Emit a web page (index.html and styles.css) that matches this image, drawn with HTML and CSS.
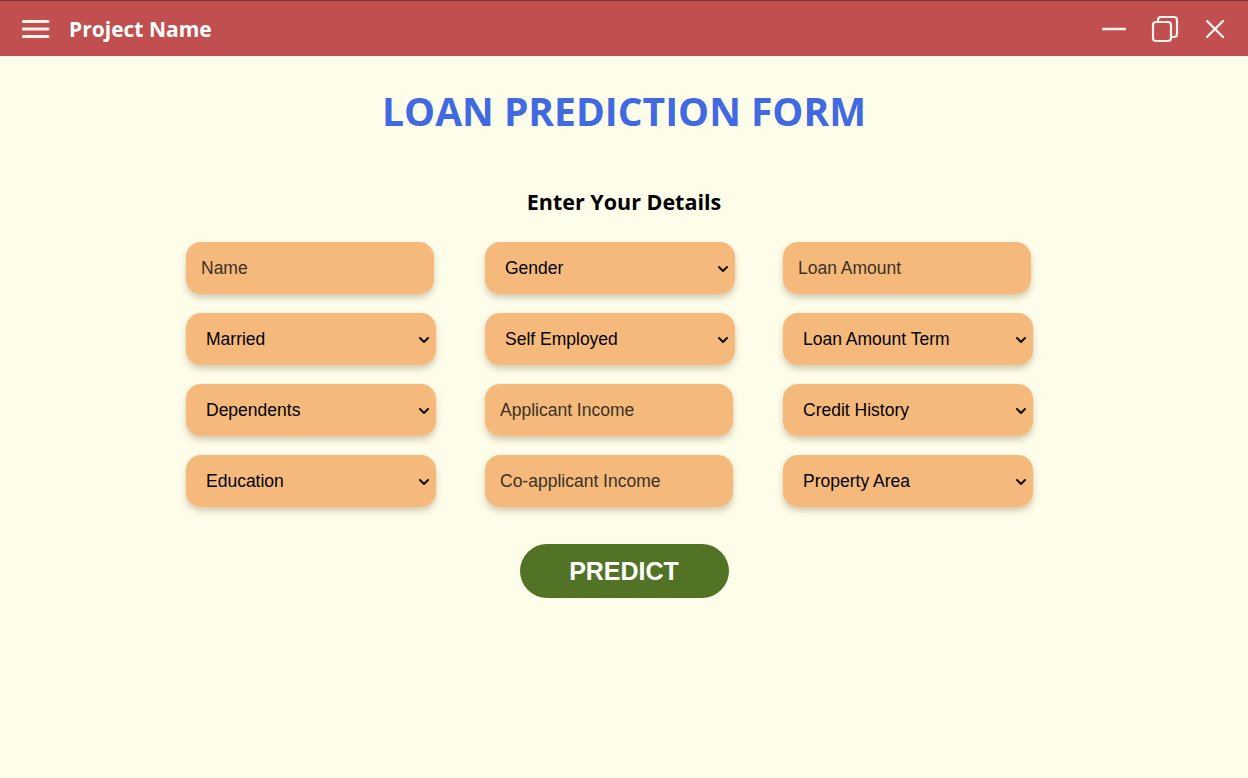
FILE: index.html
```html
<!DOCTYPE html>
<html>
<head>
<meta charset="utf-8">
<link rel="stylesheet" href="styles.css">
<title>Loan Prediction</title>
</head>
<body>
<header class="titlebar">
  <div class="tb-left">
    <svg class="icon-menu" width="28" height="20" viewBox="0 0 28 20"><path d="M1 2.5H26M1 10H26M1 17.5H26" stroke="#fdf2ea" stroke-width="3" stroke-linecap="round" fill="none"/></svg>
    <span class="tb-title">Project Name</span>
  </div>
  <div class="tb-right">
    <svg width="24" height="24" viewBox="0 0 24 24"><path d="M1 12H23" stroke="#fdf2ea" stroke-width="2.6" stroke-linecap="round"/></svg>
    <svg width="28" height="28" viewBox="0 0 28 28"><rect x="2" y="7" width="18" height="19" rx="3" stroke="#fdf2ea" stroke-width="2.2" fill="none"/><path d="M7 7V5a3 3 0 0 1 3-3h13a3 3 0 0 1 3 3v14a3 3 0 0 1-3 3h-3" stroke="#fdf2ea" stroke-width="2.2" fill="none"/></svg>
    <svg width="22" height="22" viewBox="0 0 22 22"><path d="M3 3L19 19M19 3L3 19" stroke="#fdf2ea" stroke-width="2.4" stroke-linecap="round"/></svg>
  </div>
</header>
<main class="page">
  <h1 class="heading">LOAN PREDICTION FORM</h1>
  <h2 class="subheading">Enter Your Details</h2>
  <form class="form">
    <div class="grid">
      <input class="field" type="text" placeholder="Name">
      <div class="sel"><select class="field"><option>Gender</option></select><svg class="chev" viewBox="0 0 10 6"><path d="M1 1L5 5L9 1" stroke="#111" stroke-width="2" fill="none" stroke-linecap="round" stroke-linejoin="round"/></svg></div>
      <input class="field" type="text" placeholder="Loan Amount">

      <div class="sel"><select class="field"><option>Married</option></select><svg class="chev" viewBox="0 0 10 6"><path d="M1 1L5 5L9 1" stroke="#111" stroke-width="2" fill="none" stroke-linecap="round" stroke-linejoin="round"/></svg></div>
      <div class="sel"><select class="field"><option>Self Employed</option></select><svg class="chev" viewBox="0 0 10 6"><path d="M1 1L5 5L9 1" stroke="#111" stroke-width="2" fill="none" stroke-linecap="round" stroke-linejoin="round"/></svg></div>
      <div class="sel"><select class="field"><option>Loan Amount Term</option></select><svg class="chev" viewBox="0 0 10 6"><path d="M1 1L5 5L9 1" stroke="#111" stroke-width="2" fill="none" stroke-linecap="round" stroke-linejoin="round"/></svg></div>

      <div class="sel"><select class="field"><option>Dependents</option></select><svg class="chev" viewBox="0 0 10 6"><path d="M1 1L5 5L9 1" stroke="#111" stroke-width="2" fill="none" stroke-linecap="round" stroke-linejoin="round"/></svg></div>
      <input class="field" type="text" placeholder="Applicant Income">
      <div class="sel"><select class="field"><option>Credit History</option></select><svg class="chev" viewBox="0 0 10 6"><path d="M1 1L5 5L9 1" stroke="#111" stroke-width="2" fill="none" stroke-linecap="round" stroke-linejoin="round"/></svg></div>

      <div class="sel"><select class="field"><option>Education</option></select><svg class="chev" viewBox="0 0 10 6"><path d="M1 1L5 5L9 1" stroke="#111" stroke-width="2" fill="none" stroke-linecap="round" stroke-linejoin="round"/></svg></div>
      <input class="field" type="text" placeholder="Co-applicant Income">
      <div class="sel"><select class="field"><option>Property Area</option></select><svg class="chev" viewBox="0 0 10 6"><path d="M1 1L5 5L9 1" stroke="#111" stroke-width="2" fill="none" stroke-linecap="round" stroke-linejoin="round"/></svg></div>
    </div>
    <div class="actions">
      <button type="button" class="predict">PREDICT</button>
    </div>
  </form>
</main>
</body>
</html>
```

FILE: styles.css
```css
* { box-sizing: border-box; }
html, body { margin: 0; height: 100%; }
body {
  background: #fefde9;
  font-family: "Open Sans", "Noto Sans", sans-serif;
}
.titlebar {
  height: 56px;
  background: #c14f4f;
  border-top: 1px solid #7a3535;
  display: flex;
  align-items: center;
  justify-content: space-between;
  padding: 0 22px 0 22px;
  color: #fff;
}
.tb-left { display: flex; align-items: center; gap: 19px; }
.icon-menu { display: block; }
.tb-title {
  font-size: 21px;
  font-weight: 700;
  color: #fff;
}
.tb-right { display: flex; align-items: center; gap: 25px; }
.tb-right svg { display: block; }
.page { padding-top: 28px; }
.heading {
  margin: 0;
  text-align: center;
  font-size: 39px;
  font-weight: 700;
  color: #4169e1;
  line-height: 54px;
}
.subheading {
  margin: 49px 0 0;
  text-align: center;
  font-size: 21.5px;
  font-weight: 700;
  color: #000;
  line-height: 30px;
}
.form { margin-top: 25px; }
.grid {
  display: grid;
  grid-template-columns: 250px 249px 250px;
  column-gap: 49px;
  row-gap: 19px;
  padding-left: 186px;
}
.field {
  width: 100%;
  height: 52px;
  border: none;
  outline: none;
  border-radius: 15px;
  background: #f5ba7b;
  box-shadow: 0 4px 6px rgba(90, 60, 20, 0.25);
  font-family: "Liberation Sans", Arial, sans-serif;
  font-size: 17.5px;
  color: #000;
  padding: 0 15px;
}
input.field { width: 248px; }
.field::placeholder { color: #3a3226; opacity: 1; }
.sel { position: relative; width: 250px; }
select.field {
  appearance: none;
  -webkit-appearance: none;
  padding-left: 20px;
  display: block;
}
.chev {
  position: absolute;
  right: 7px;
  top: 24px;
  width: 10px;
  height: 6px;
  pointer-events: none;
}
.actions { display: flex; justify-content: center; margin-top: 37px; }
.predict {
  width: 209px;
  height: 54px;
  border: none;
  border-radius: 27px;
  background: #527326;
  color: #fff;
  font-family: "Liberation Sans", Arial, sans-serif;
  font-size: 25px;
  font-weight: 700;
  cursor: pointer;
}
```
